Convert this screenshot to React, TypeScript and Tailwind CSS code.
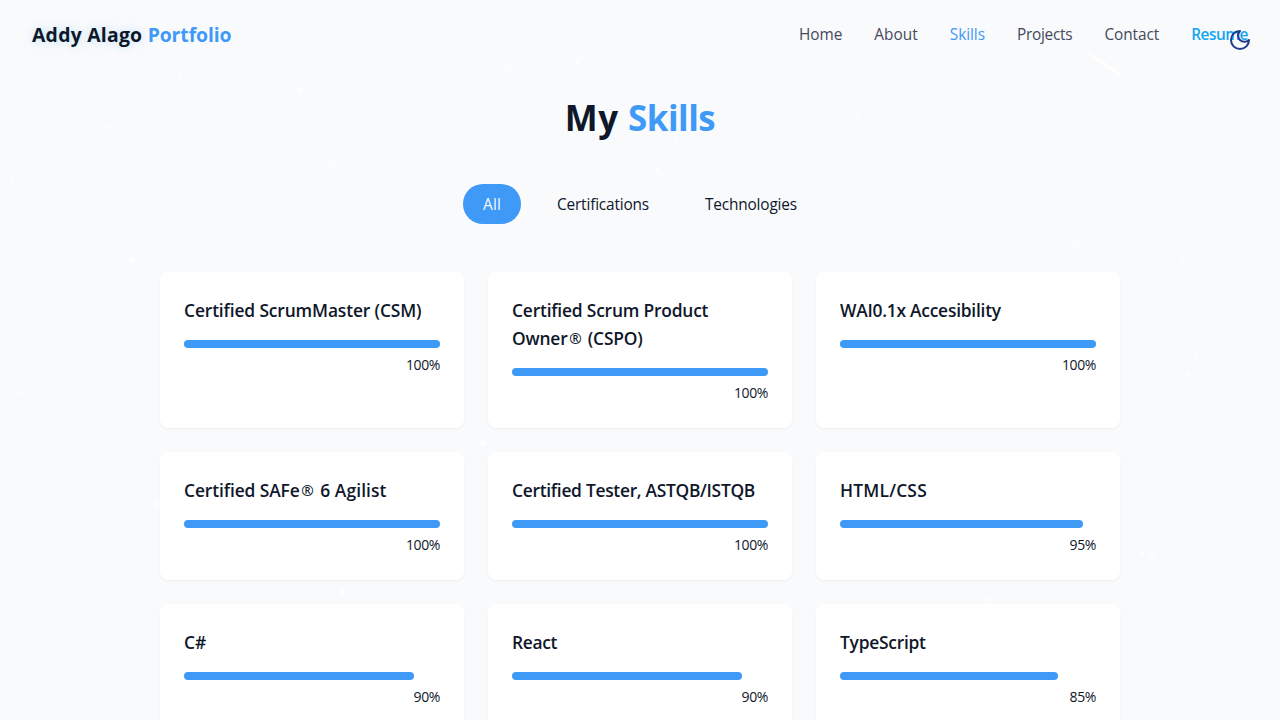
import type { ReactNode } from "react";

const navItems = [
  { label: "Home", style: "tracking-[-0.05px]" },
  { label: "About", style: "tracking-[0.04px]" },
  { label: "Skills", style: "tracking-[-0.08px] text-[#3f99f7]" },
  { label: "Projects", style: "tracking-[-0.25px]" },
  { label: "Contact", style: "tracking-[-0.08px]" },
  { label: "Resume", style: "font-semibold tracking-[-0.45px] text-[#11a6f2]" },
];

const filters = [
  { label: "All", style: "bg-[#3f99f7] font-medium tracking-[0.1px] text-[#f8fafc] w-[58px]" },
  { label: "Certifications", style: "tracking-[-0.17px] w-[132px]" },
  { label: "Technologies", style: "tracking-[-0.17px] w-[132px]" },
];

function Registered() {
  return <span className="inline-block w-4 text-center align-[1px] font-['Noto_Sans'] text-[15px] leading-none font-normal tracking-normal">®</span>;
}

const skills: { name: ReactNode; level: number; style: string }[] = [
  { name: "Certified ScrumMaster (CSM)", level: 100, style: "tracking-[-0.14px]" },
  { name: <>Certified Scrum Product <span className="whitespace-nowrap">Owner<Registered /> (CSPO)</span></>, level: 100, style: "tracking-[-0.2px]" },
  { name: "WAI0.1x Accesibility", level: 100, style: "tracking-[-0.24px]" },
  { name: <><span className="tracking-[-0.11px]">Certified SAFe</span><Registered /> 6 Agilist</>, level: 100, style: "tracking-[0.1px]" },
  { name: "Certified Tester, ASTQB/ISTQB", level: 100, style: "tracking-[-0.29px]" },
  { name: "HTML/CSS", level: 95, style: "tracking-[0.2px]" },
  { name: "C#", level: 90, style: "" },
  { name: "React", level: 90, style: "tracking-[-0.36px]" },
  { name: "TypeScript", level: 85, style: "tracking-[-0.25px]" },
];

// x, y, core radius, halo radius
const stars = [
  [180, 77, 1.2, 3], [212, 76, 1.2, 0], [300, 90, 2.2, 9], [107, 126, 1.5, 4], [142, 130, 0, 7],
  [331, 166, 1.2, 10], [508, 65, 1.8, 11], [577, 62, 2, 9], [657, 170, 2.2, 9], [676, 138, 1.4, 0],
  [621, 90, 0, 4], [720, 137, 1, 0], [1078, 241, 1.2, 11], [1128, 257, 1.3, 3], [1183, 261, 1, 4],
  [1197, 357, 2.2, 0], [1187, 375, 2, 3], [1204, 406, 1, 0], [1142, 554, 2.2, 0], [1152, 557, 2, 0],
  [1233, 529, 1, 10], [988, 26, 1.8, 3], [1134, 92, 1.4, 0], [1114, 55, 1, 0], [132, 260, 1.8, 4],
  [483, 443, 2.2, 4], [342, 592, 2, 4], [726, 596, 1.6, 0], [57, 646, 0, 10], [107, 692, 1.2, 4],
  [157, 504, 1.8, 4], [20, 393, 1.2, 4], [12, 179, 1, 3], [586, 270, 1, 5], [523, 215, 0, 9],
  [858, 115, 1, 3], [868, 172, 0.7, 4], [941, 596, 1, 3], [988, 600, 1, 4],
];

function Starfield() {
  return (
    <svg className="pointer-events-none absolute inset-0 h-full w-full" viewBox="0 0 1280 720" aria-hidden="true">
      <defs>
        <linearGradient id="trail" x1="0" y1="0" x2="1" y2="1">
          <stop offset="0" stopColor="#fff" stopOpacity="0.2" />
          <stop offset="0.5" stopColor="#fff" />
          <stop offset="1" stopColor="#fff" />
        </linearGradient>
      </defs>
      {stars.map(([x, y, r, halo]) => (
        <g key={`${x}-${y}`} fill="#fff">
          <circle cx={x} cy={y} r={halo} opacity=".28" />
          <circle cx={x} cy={y} r={r} opacity=".8" />
        </g>
      ))}
      <path d="M1079 46L1119 74.5" stroke="url(#trail)" strokeWidth="3.5" strokeLinecap="round" />
    </svg>
  );
}

export default function App() {
  return (
    <div className="relative h-[720px] overflow-hidden bg-[#f9fafc] font-['Open_Sans','Noto_Sans',sans-serif] text-[#0f172a]">
      <Starfield />
      <header className="relative flex h-[70px] items-center justify-between px-8">
        <div className="text-[19.4px] leading-7 font-bold whitespace-pre">
          <span className="tracking-[0.24px] [text-shadow:0_0_10px_rgba(14,165,233,0.25)]">Addy Alago </span>
          <span className="tracking-[-0.1px] text-[#3f99f7]">Portfolio</span>
        </div>
        <nav className="flex gap-8 text-[15.4px] leading-6 text-[#45495a]">
          {navItems.map((item) => (
            <a key={item.label} href="#" className={item.style}>{item.label}</a>
          ))}
        </nav>
        <button className="absolute top-7 right-7 text-[#1e3a8a]" aria-label="Toggle theme">
          <svg className="size-6" viewBox="0 0 24 24" fill="none" stroke="currentColor" strokeWidth="2" strokeLinecap="round" strokeLinejoin="round">
            <path d="M12 3a6 6 0 0 0 9 9 9 9 0 1 1-9-9Z" />
          </svg>
        </button>
      </header>
      <main className="relative mx-auto w-[960px] pt-7">
        <h1 className="mb-[46px] text-center text-[34.9px] leading-10 font-bold whitespace-pre">
          <span className="tracking-[0.5px]">My </span>
          <span className="tracking-[-0.5px] text-[#3f99f7]">Skills</span>
        </h1>
        <div className="mb-12 flex justify-center gap-4 text-[15.4px] leading-6">
          {filters.map((f) => (
            <button key={f.label} className={`rounded-full pt-[9px] pb-[7px] text-center ${f.style}`}>{f.label}</button>
          ))}
        </div>
        <div className="grid grid-cols-3 gap-6">
          {skills.map((skill, i) => (
            <article key={i} className="rounded-lg bg-white p-6 shadow-[0_1px_2px_rgba(0,0,0,0.05)]">
              <h2 className={`mb-4 text-[17.4px] leading-7 font-semibold ${skill.style}`}>{skill.name}</h2>
              <div className="h-2 rounded-full">
                <div className="h-2 rounded-full bg-[#3f99f7]" style={{ width: `${skill.level}%` }} />
              </div>
              <p className="mt-[7px] mb-px text-right text-[14px] leading-5 tracking-[-0.4px]">{skill.level}%</p>
            </article>
          ))}
        </div>
      </main>
    </div>
  );
}
